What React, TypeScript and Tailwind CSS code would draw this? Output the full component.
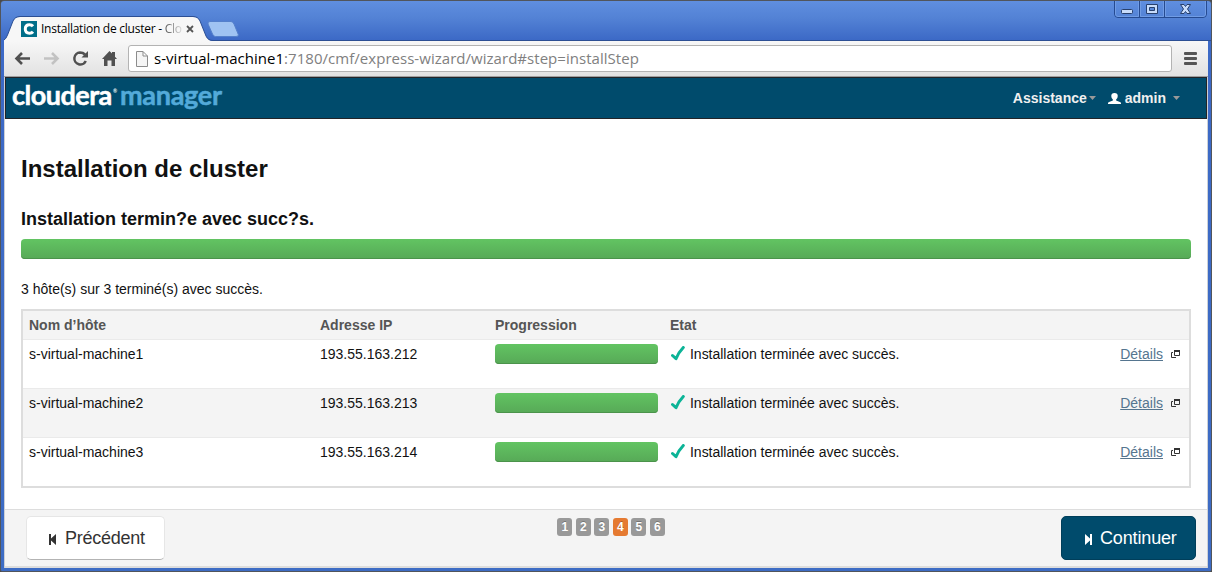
import React from "react";

const hosts = [
  { name: "s-virtual-machine1", ip: "193.55.163.212" },
  { name: "s-virtual-machine2", ip: "193.55.163.213" },
  { name: "s-virtual-machine3", ip: "193.55.163.214" },
];

function ProgressBar() {
  return <div className="h-5 w-full rounded-[4px] bg-linear-to-b from-[#62c462] to-[#57a957] shadow-[inset_0_-1px_0_#4b934b]" />;
}

function TitleBar() {
  return (
    <div className="relative flex h-[41px] w-full items-end">
      <svg className="block h-[25px] w-[244px] shrink-0" viewBox="1 16 244 25" fill="none">
        <path d="M4 42 L4 40 Q6 39 7.500 35 L13 21 Q15 17 20 17 H193 Q198 17 200 21 L206 36 Q208 41 213 41 V42Z" fill="#f7f7f7" />
        <path d="M4 40 Q6 39 7.500 35 L13 21 Q15 16.500 20 16.500 H193 Q198 16.500 200 21 L206 36 Q208 40.500 213 40.500 H245" stroke="#2c4f94" />
        <path d="M210 21.500 H231 Q233 21.500 234 24 L238.500 35 Q238 36.500 236 36.500 H215.500 Q213.500 36.500 212.500 34 L208 24 Q207.500 21.500 210 21.500Z" fill="#9fc3f2" stroke="#5480cb" />
      </svg>
      <div className="h-px grow bg-[#2c4f94]" />
      <div className="absolute left-[20px] top-[21px] flex h-4 items-center">
        <svg className="block size-4" viewBox="0 0 16 16">
          <rect width="16" height="16" fill="#006e89" />
          <path d="M12 5.300Q10.800 3.800 8.500 3.800Q4.300 3.800 4.300 8T8.500 12.200Q10.800 12.200 12 10.700" fill="none" stroke="#fff" strokeWidth="3" />
        </svg>
        <span className="ml-[4px] w-[138px] whitespace-nowrap font-['Open_Sans',sans-serif] text-[12px] leading-4 tracking-[-0.25px] text-black">
          Installation de cluster - <span className="bg-linear-to-r from-[#555] to-[#ddd] bg-clip-text text-transparent">Clo</span>
        </span>
        <svg className="ml-[7px] block size-2" viewBox="0 0 8 8"><path d="M1 1L7 7M7 1L1 7" stroke="#555" strokeWidth="1.800" /></svg>
      </div>
      <svg className="absolute right-[3px] top-0 block h-[19px] w-[94px]" viewBox="0 0 94 19" fill="none">
        <path d="M.5 0V14Q.5 17.500 4 17.500H89Q92.500 17.500 92.500 14V0M25.500 0V17M50.500 0V17" stroke="#254a91" />
        <path d="M1.500 1V14Q1.500 16.500 4 16.500H24.500V1M26.500 1V16.500H49.500V1M51.500 1V16.500H89Q91.500 16.500 91.500 14V1" stroke="#719ce4" />
        <rect x="7.500" y="9.500" width="11" height="4" rx="1" fill="#c7dbfa" stroke="#28406d" />
        <path d="M32.500 4.500H43.500V13.500H32.500ZM35.500 7.500V10.500H40.500V7.500Z" fill="#c7dbfa" fillRule="evenodd" stroke="#28406d" />
        <path d="M66.500 4.500H70L71.500 6.500L73 4.500H76.500L73.500 9L76.500 13.500H73L71.500 11.500L70 13.500H66.500L69.500 9Z" fill="#c7dbfa" stroke="#28406d" />
      </svg>
    </div>
  );
}

function Toolbar() {
  return (
    <div className="mx-[3px] flex h-[36px] items-center border-b border-[#a0a0a0] bg-linear-to-b from-[#f7f7f7] to-[#e2e2e2]">
      <svg className="block h-[36px] w-[124px] shrink-0" viewBox="4 41 124 36" fill="none">
        <path d="M30 58.500H17M22 53L16.500 58.500L22 64" stroke="#505050" strokeWidth="2.600" />
        <path d="M44 58.500H57M52 53L57.500 58.500L52 64" stroke="#c2c2c2" strokeWidth="2.600" />
        <path d="M85 54.500Q83 52.500 80 52.500A6 6 0 1 0 85.800 61" stroke="#505050" strokeWidth="2.500" />
        <path d="M88 51V57.500H81.500Z" fill="#505050" />
        <path d="M102 59L109.500 51L112 53.500V52H115V56.700L117 59H115V66H111.500V60.500H107.500V66H104V59Z" fill="#505050" />
      </svg>
      <div className="flex h-[27px] w-[1044px] items-center rounded-[3px] border border-[#b3b3b3] bg-white pl-[7px]">
        <svg className="block h-[16px] w-[12px] shrink-0" viewBox="0 0 12 16" fill="#f5f5f5" stroke="#8c8c8c">
          <path d="M.5 .5H7L11.500 5V15.500H.5ZM7 .5V5H11.500" />
        </svg>
        <span className="mb-[2px] ml-[6px] whitespace-nowrap font-['Open_Sans',sans-serif] text-[15px] leading-5 tracking-[0.035px] text-[#808080]">
          <span className="text-black">s-virtual-machine1</span>:7180/cmf/express-wizard/wizard#step=installStep
        </span>
      </div>
      <svg className="ml-[12px] block h-[13px] w-[13px]" viewBox="0 0 13 13" fill="#555">
        <rect width="13" height="3" rx="1" /><rect y="5" width="13" height="3" rx="1" /><rect y="10" width="13" height="3" rx="1" />
      </svg>
    </div>
  );
}

function Caret({ className }: { className: string }) {
  return <svg className={`block h-1 w-[7px] ${className}`} viewBox="0 0 7 4"><path d="M0 0H7L3.500 4Z" fill="#999" /></svg>;
}

function Header() {
  return (
    <header className="flex h-[42px] items-center border border-[#222428] bg-[#004b6c] pl-[6px] pr-[26px]">
      <div className="mt-[-7px] flex whitespace-nowrap font-['Lato',sans-serif] text-[27px] font-bold leading-8">
        <span className="w-[101px] tracking-[-0.5px] text-white [-webkit-text-stroke:0.5px_#fff]">cloudera</span>
        <span className="mt-[2px] w-[7px] text-[5px] leading-[20px] text-white">®</span>
        <span className="tracking-[-0.3px] text-[#53aad9] [-webkit-text-stroke:0.5px_#53aad9]">manager</span>
      </div>
      <div className="ml-auto flex items-center text-[14px] font-bold text-[#f0f0f0]">
        <span>Assistance</span>
        <Caret className="ml-[2px]" />
        <svg className="ml-[12px] mr-[4px] block h-[11px] w-[13px]" viewBox="0 0 12 12" preserveAspectRatio="none" fill="white">
          <path d="M6 0Q9 0 9 3.200Q9 5.700 7.500 7.200V8.200L11 9.700Q12 10.200 12 11V12H0V11Q0 10.200 1 9.700L4.500 8.200V7.200Q3 5.700 3 3.200Q3 0 6 0Z" />
        </svg>
        <span>admin</span>
        <Caret className="ml-[7px]" />
      </div>
    </header>
  );
}

function HostTable() {
  return (
    <table className="mt-[10px] w-full table-fixed border-collapse border-2 border-[#ddd] text-left text-[14px] leading-5">
      <colgroup><col className="w-[292px]" /><col className="w-[175px]" /><col className="w-[175px]" /><col /><col className="w-[90px]" /></colgroup>
      <thead className="bg-[#f4f4f4] text-[#555]">
        <tr className="h-[29px]">
          {["Nom d’hôte", "Adresse IP", "Progression", "Etat", ""].map((h) => <th key={h} className="px-[6px] pb-0 pt-px font-bold">{h}</th>)}
        </tr>
      </thead>
      <tbody>
        {hosts.map((host) => (
          <tr key={host.name} className="h-[49px] border-t border-[#eaeaea] align-top last:h-[50px] even:bg-[#f4f4f4]">
            <td className="px-[6px] pt-[4px]">{host.name}</td>
            <td className="px-[6px] pt-[4px]">{host.ip}</td>
            <td className="px-[6px] pt-[4px]"><ProgressBar /></td>
            <td className="px-[6px] pt-[4px]">
              <div className="flex items-center pl-px">
                <svg className="block h-[15px] w-[14px]" viewBox="0 0 14 15" fill="none"><path d="M1.500 9.500L5 12.700Q7.500 6.500 12.300 1.500" stroke="#0cb497" strokeWidth="3" strokeLinecap="round" strokeLinejoin="round" /></svg>
                <span className="ml-[5px] whitespace-nowrap tracking-[-0.02px]">Installation terminée avec succès.</span>
              </div>
            </td>
            <td className="pt-[4px] pr-[9px]">
              <div className="flex items-center justify-end">
                <a className="text-[#55758f] underline">Détails</a>
                <svg className="ml-[8px] block h-2 w-[9px]" viewBox="0 0 9 8" fill="none" stroke="#333"><path d="M3.500 1V5.500H8.500V1M3 .5H9M3 1.500H9M2 2.500H.5V7.500H5" /></svg>
              </div>
            </td>
          </tr>
        ))}
      </tbody>
    </table>
  );
}

function StepIcon({ back }: { back?: boolean }) {
  return (
    <svg className={`mt-[2px] block h-[11px] w-[7px] ${back ? "" : "rotate-180"}`} viewBox="0 0 7 11" fill="currentColor">
      <path d="M0 0H2V4.500L7 0V11L2 6.500V11H0Z" />
    </svg>
  );
}

function Footer() {
  return (
    <footer className="flex h-[59px] items-start justify-between border-b-2 border-t border-[#ddd] bg-[#f4f4f4] pl-[21px] pr-[11px] pt-[6px]">
      <button className="flex h-[44px] w-[139px] items-center rounded-[5px] border border-[#e6e6e6] border-b-[#b3b3b3] bg-white pl-[22px] text-[18px] text-[#333]">
        <StepIcon back /><span className="ml-[9px] tracking-[-0.25px]">Précédent</span>
      </button>
      <div className="mt-[2px] flex gap-[3.500px] pr-[4px]">
        {[1, 2, 3, 4, 5, 6].map((n) => (
          <span key={n} className={`flex h-[18px] w-[15px] items-center justify-center rounded-[3px] text-[12px] font-bold text-white [text-shadow:0_-1px_0_rgba(0,0,0,.25)] ${n === 4 ? "bg-[#e57a31]" : "bg-[#999]"}`}>{n}</span>
        ))}
      </div>
      <button className="flex h-[44px] w-[135px] items-center rounded-[5px] border border-[#003e5a] bg-[#004b6c] pl-[23px] text-[18px] text-white">
        <StepIcon /><span className="ml-[8px] tracking-[-0.15px]">Continuer</span>
      </button>
    </footer>
  );
}

export default function App() {
  return (
    <div className="h-[572px] w-[1212px] overflow-hidden bg-[#4a4a4a] font-['Liberation_Sans',sans-serif] text-[#111]">
      <div className="h-[572px] w-full overflow-hidden rounded-b-[2px] rounded-t-[4px] border border-[#51555c] bg-[#3d6cc4]">
        <div className="-mt-px h-[571px] bg-[linear-gradient(#608fe0_0px,#5382d5_18px,#3c69c6_40px,#3d6cc4_100%)]">
          <TitleBar />
          <Toolbar />
          <div className="mx-[3px] border-x border-[#ccd0d6] bg-white">
            <Header />
            <main className="h-[390px] pl-[16px] pr-[16px]">
              <h1 className="pt-[34px] text-[24px] font-bold leading-8">Installation de cluster</h1>
              <h2 className="mt-[22px] text-[18px] font-bold leading-6">Installation termin?e avec succ?s.</h2>
              <div className="mt-[8px]"><ProgressBar /></div>
              <p className="mt-[20px] text-[14px] leading-5">3 hôte(s) sur 3 terminé(s) avec succès.</p>
              <HostTable />
            </main>
            <Footer />
          </div>
        </div>
      </div>
    </div>
  );
}
